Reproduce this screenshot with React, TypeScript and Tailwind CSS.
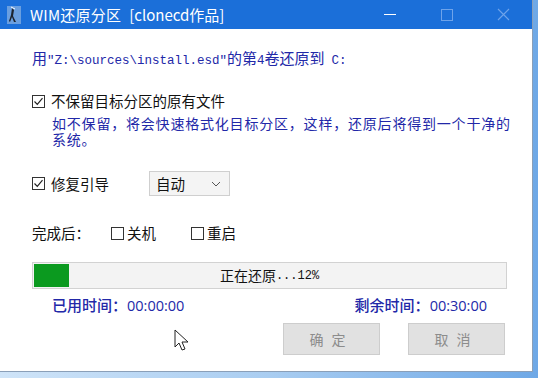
import React from "react";

const cjk = "font-['Noto_Sans_CJK_SC',sans-serif]";
const mono = "font-['Liberation_Mono','Noto_Sans_CJK_SC',monospace]";

function Check({ checked }: { checked?: boolean }) {
  return (
    <span className="flex h-[13px] w-[13px] shrink-0 items-center justify-center border border-[#333] bg-white">
      {checked ? (
        <svg width="11" height="11" viewBox="0 0 11 11">
          <path d="M1.5 5.5 L4.3 8.3 L9.5 2.2" fill="none" stroke="#222" strokeWidth="1.2" />
        </svg>
      ) : null}
    </span>
  );
}

export default function App() {
  return (
    <div className="relative h-[378px] w-[538px] overflow-hidden bg-gradient-to-r from-[#cfe4f8] via-[#a9cdf1] to-[#6ea8e6]">
      <div className={`flex h-[372px] w-[533px] flex-col border-r border-b border-[#8a9fb8] bg-white ${cjk}`}>
        {/* title bar */}
        <div className="flex h-[29px] shrink-0 items-center bg-[#1b6fd9] pl-[7px] text-white">
          <svg width="14" height="18" viewBox="0 0 14 18" className="mr-[9px]">
            <rect x="0" y="0" width="14" height="18" fill="#6a9fe0" />
            <path d="M5 2 L7 4 L6 10 L9 16 L7 16 L5 11 L3 16 L2 15 L4 9 Z" fill="#1c2430" />
            <path d="M4 1 L8 3" stroke="#fff" strokeWidth="1" />
          </svg>
          <span className="text-[15px] leading-none tracking-[0.2px]">WIM还原分区</span>
          <span className="ml-[8px] text-[15px] leading-none">[clonecd作品]</span>
          <div className="ml-auto flex h-full items-center">
            <div className="flex h-full w-[57px] items-center justify-center">
              <div className="h-[1px] w-[12px] bg-white" />
            </div>
            <div className="flex h-full w-[57px] items-center justify-center">
              <div className="h-[12px] w-[12px] border border-[#6ea3ea]" />
            </div>
            <div className="flex h-full w-[57px] items-center justify-center">
              <svg width="13" height="13" viewBox="0 0 13 13">
                <path d="M1 1 L12 12 M12 1 L1 12" stroke="#6ea3ea" strokeWidth="1.1" />
              </svg>
            </div>
          </div>
        </div>

        <div className="flex flex-col pl-[32px] pr-[16px]">
          {/* source line */}
          <div className="mt-[20px] flex h-[18px] items-baseline text-[15px] leading-[18px] text-[#2228a8]">
            <span>用</span>
            <span className={`${mono} text-[12.5px]`}>"Z:\sources\install.esd"</span>
            <span>的第</span>
            <span className={`${mono} text-[12.5px]`}>4</span>
            <span>卷还原到</span>
            <span className={`${mono} ml-[7px] text-[12.5px]`}>C:</span>
          </div>

          {/* keep files */}
          <div className="mt-[25px] flex h-[18px] items-center gap-[6px] text-[14.5px] text-[#111]">
            <Check checked />
            <span>不保留目标分区的原有文件</span>
          </div>
          <div className="mt-[5px] whitespace-nowrap pl-[20px] text-[14px] leading-[16px] tracking-[0.8px] text-[#2228a8]">
            <div>如不保留，将会快速格式化目标分区，这样，还原后将得到一个干净的</div>
            <div>系统。</div>
          </div>

          {/* boot repair */}
          <div className="mt-[24px] flex h-[25px] items-center text-[14.5px] text-[#111]">
            <Check checked />
            <span className="ml-[6px]">修复引导</span>
            <div className="ml-[40px] flex h-[25px] w-[81px] items-center justify-between border border-[#cfcfcf] bg-[#f4f4f4] pl-[6px] pr-[8px]">
              <span>自动</span>
              <svg width="10" height="6" viewBox="0 0 10 6">
                <path d="M1 1 L5 5 L9 1" fill="none" stroke="#555" strokeWidth="1" />
              </svg>
            </div>
          </div>

          {/* after finish */}
          <div className="mt-[28px] flex h-[18px] items-center text-[14.5px] text-[#111]">
            <span className="w-[79px]">完成后：</span>
            <Check />
            <span className="ml-[3px] w-[64px]">关机</span>
            <Check />
            <span className="ml-[3px]">重启</span>
          </div>

          {/* progress */}
          <div className="relative mt-[20px] flex h-[27px] w-[475px] items-center border border-[#d2d2d2] bg-[#f3f3f3] p-[1px]">
            <div className="h-full w-[35px] bg-[#0b9a1f]" />
            <span className="absolute inset-0 flex items-center justify-center text-[14px] text-[#111]">
              正在还原<span className={`${mono} text-[12px]`}>...12%</span>
            </span>
          </div>

          {/* times */}
          <div className="mt-[7px] flex h-[18px] w-[455px] items-center justify-between pl-[20px] text-[15px] font-medium text-[#2228a8]">
            <span>
              已用时间：<span className="font-['Open_Sans',sans-serif] text-[14.5px] font-normal">00:00:00</span>
            </span>
            <span>
              剩余时间：<span className="font-['Open_Sans',sans-serif] text-[14.5px] font-normal">00:30:00</span>
            </span>
          </div>

          {/* buttons */}
          <div className="mt-[9px] flex justify-end gap-[28px] pr-[11px]">
            <button className="h-[32px] w-[97px] border border-[#cdcdcd] bg-[#e1e1e1] text-[14px] tracking-[8px] text-[#8c8c8c]">
              确定
            </button>
            <button className="h-[32px] w-[97px] border border-[#cdcdcd] bg-[#e1e1e1] text-[14px] tracking-[8px] text-[#8c8c8c]">
              取消
            </button>
          </div>
        </div>
      </div>

      {/* mouse cursor */}
      <svg className="absolute left-[174px] top-[329px]" width="16" height="24" viewBox="0 0 16 24">
        <path d="M1 1 L1 18 L5 14 L8 21 L11 20 L8 13 L14 13 Z" fill="#fff" stroke="#222" strokeWidth="1" strokeLinejoin="round" />
      </svg>
    </div>
  );
}
